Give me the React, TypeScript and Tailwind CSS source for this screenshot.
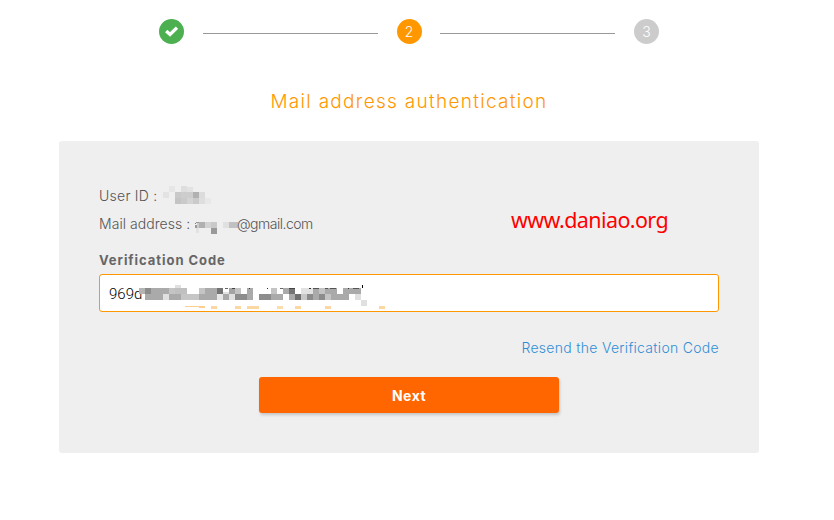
import React from "react";

type Cell = [x: number, y: number, w: number, h: number, fill: string];

const userCells: Cell[] = [
  [6, 0, 6, 6, "#e6e6e6"], [18, 0, 6, 6, "#dedede"], [24, 1, 6, 5, "#e2e2e2"],
  [0, 6, 6, 6, "#e3e3e3"], [12, 6, 6, 6, "#c9c9c9"], [18, 6, 12, 6, "#cdcdcd"], [30, 6, 6, 6, "#b1b1b1"], [36, 6, 6, 6, "#dcdcdc"],
  [12, 12, 6, 6, "#c4c4c4"], [18, 12, 6, 6, "#cacaca"], [24, 12, 6, 6, "#d4d4d4"], [30, 12, 6, 6, "#cacaca"], [36, 12, 6, 6, "#dedede"], [42, 12, 6, 6, "#e8e8e8"],
];

const mailCells: Cell[] = [
  [0, 1, 1, 1, "#777777"], [1, 0, 3, 1, "#999999"], [0, 3, 2, 3, "#999999"], [2, 1, 3, 5, "#cccccc"],
  [4, 0, 6, 6, "#b0b0b0"], [10, 0, 6, 6, "#d2d2d2"], [16, 0, 6, 6, "#c9c9c9"],
  [28, 0, 6, 6, "#e0e0e0"], [34, 0, 9, 6, "#c1c1c1"], [1, 6, 3, 5, "#e2e2e2"], [16, 6, 6, 6, "#999999"],
];

const codeCells: Cell[] = [
  [0, 0, 6, 3, "#ffffff"], [36, 0, 6, 3, "#e0e0e0"],
  [0, 3, 6, 6, "#b4b4b4"], [6, 3, 6, 6, "#8c8c8c"], [12, 3, 18, 6, "#aaaaaa"], [30, 3, 6, 6, "#c4c4c4"], [36, 3, 12, 6, "#c0c0c0"],
  [60, 3, 6, 6, "#c4c4c4"], [66, 3, 12, 6, "#aaaaaa"], [78, 3, 6, 6, "#747474"], [86, 3, 3, 1, "#666666"], [84, 7, 6, 2, "#e2e2e2"],
  [90, 3, 6, 6, "#a4a4a4"], [96, 3, 6, 6, "#c4c4c4"], [108, 3, 6, 6, "#aaaaaa"], [132, 3, 6, 6, "#c4c4c4"],
  [144, 3, 6, 6, "#aaaaaa"], [150, 3, 6, 6, "#747474"], [162, 3, 12, 6, "#e2e2e2"], [174, 3, 6, 6, "#aaaaaa"], [180, 3, 6, 6, "#c4c4c4"],
  [186, 3, 12, 6, "#aaaaaa"], [204, 3, 18, 6, "#aaaaaa"],
  [6, 9, 18, 6, "#aaaaaa"], [24, 9, 6, 6, "#e0e0e0"], [30, 9, 12, 6, "#aaaaaa"], [42, 9, 18, 6, "#c6c6c6"], [60, 9, 18, 6, "#aaaaaa"],
  [78, 9, 6, 6, "#e8e8e8"], [84, 9, 6, 6, "#aaaaaa"], [90, 9, 6, 6, "#e0e0e0"], [96, 9, 12, 6, "#8c8c8c"], [108, 9, 6, 6, "#aaaaaa"],
  [120, 9, 12, 6, "#8c8c8c"], [132, 9, 12, 6, "#aaaaaa"], [150, 9, 6, 6, "#aaaaaa"], [156, 9, 6, 6, "#707070"], [162, 9, 6, 6, "#c8c8c8"],
  [168, 9, 6, 6, "#8c8c8c"], [174, 9, 6, 6, "#aaaaaa"], [180, 9, 6, 6, "#8c8c8c"], [186, 9, 6, 6, "#c4c4c4"], [192, 9, 18, 6, "#aaaaaa"],
  [216, 9, 6, 6, "#e0e0e0"], [222, 15, 6, 6, "#e0e0e0"],
  [93, 3, 3, 1, "#444444"], [110, 3, 1, 1, "#333333"], [128, 3, 1, 1, "#333333"], [141, 3, 3, 1, "#666666"], [150, 3, 6, 1, "#444444"],
  [170, 3, 2, 1, "#333333"], [174, 3, 6, 1, "#555555"], [186, 3, 3, 1, "#555555"], [191, 3, 6, 1, "#555555"], [209, 3, 1, 1, "#333333"], [214, 3, 6, 1, "#555555"],
  [223, 0, 1, 3, "#000000"],
  [72, 21, 6, 3, "#fdd7a2"], [96, 21, 6, 3, "#fdd7a2"], [108, 21, 12, 3, "#fdd7a2"], [138, 21, 6, 3, "#fddcae"],
  [156, 21, 6, 3, "#fdd7a2"], [186, 21, 6, 3, "#fdd7a2"], [240, 21, 6, 3, "#fdd7a2"],
];

function Mosaic({ cells, width, height, className, children }: { cells: Cell[]; width: number; height: number; className: string; children?: React.ReactNode }) {
  return (
    <svg width={width} height={height} className={className} shapeRendering="crispEdges" aria-hidden="true">
      {children}
      {cells.map(([x, y, w, h, fill], i) => (
        <rect key={i} x={x} y={y} width={w} height={h} fill={fill} />
      ))}
    </svg>
  );
}

export default function App() {
  return (
    <main className="h-[520px] w-[834px] overflow-hidden bg-white pl-[59px] font-['Inter',sans-serif] text-sm font-light whitespace-nowrap text-[#555]">
      <div className="flex w-[700px] flex-col items-center pt-[19px]">
        <div className="flex h-[25px] w-[500px] items-center justify-between text-white">
          <span className="flex size-[25px] items-center justify-center rounded-full bg-[#4caf50]">
            <svg width="13" height="11" viewBox="0 0 13 11"><path d="M1.2 5 5 8.4 12 1.6" fill="none" stroke="white" strokeWidth="3.4" /></svg>
          </span>
          <span className="mt-1 h-px w-[175px] bg-[#999]" />
          <span className="flex size-[25px] items-center justify-center rounded-full bg-[#ff9800]">2</span>
          <span className="mt-1 h-px w-[175px] bg-[#999]" />
          <span className="flex size-[25px] items-center justify-center rounded-full bg-[#ccc]">3</span>
        </div>
        <h1 className="mt-[46px] h-6 text-[19px] leading-6 font-light tracking-[1.3px] text-[#ff9800]">
          Mail address authentication
        </h1>
      </div>

      <section className="mt-[27px] h-[312px] w-[700px] rounded-[3px] bg-[#efefef] px-10 pt-[41px]">
        <div className="relative">
          <div className="flex h-7 items-center">
            <span className="w-16 tracking-[0.25px]">User ID :</span>
            <Mosaic cells={userCells} width={48} height={18} className="-mt-[2px]" />
          </div>
          <div className="flex h-7 items-center">
            <span className="w-24 tracking-[0.05px]">Mail address :</span>
            <Mosaic cells={mailCells} width={43} height={12} className="mt-2" />
            <span className="-ml-px tracking-[-0.5px]">@gmail.com</span>
          </div>
          <p className="absolute top-[24px] left-[412px] font-['Noto_Sans',sans-serif] text-[21.5px] leading-7 font-normal tracking-[-0.6px] text-[#f00]">
            www.daniao.org
          </p>
        </div>

        <label htmlFor="code" className="mt-[10px] flex h-6 items-center text-[13px] font-bold tracking-[0.95px] text-[#666]">
          Verification Code
        </label>
        <div id="code" className="mt-[2px] flex h-[38px] w-[620px] items-start rounded-[3px] border border-[#ff9800] bg-white pt-[7px] pl-[9px] text-black">
          <span className="w-[30px] font-['Roboto',sans-serif] text-[15px] leading-6 font-light">969d</span>
          <Mosaic cells={codeCells} width={246} height={24} className="relative mt-[3px]">
            <polygon points="38,21 66,21 66,23 54,22" fill="#fdcf8f" />
          </Mosaic>
        </div>

        <div className="mt-6 flex h-6 items-center justify-end">
          <a className="tracking-[0.3px] text-[#2f8ed6]">Resend the Verification Code</a>
        </div>
        <button className="mx-auto mt-[17px] flex h-9 w-[300px] items-center justify-center rounded-[3px] bg-[#ff6600] pt-[2px] text-sm font-bold tracking-[0.5px] text-white shadow-[1px_2px_3px_rgba(0,0,0,0.18)]">
          Next
        </button>
      </section>
    </main>
  );
}
